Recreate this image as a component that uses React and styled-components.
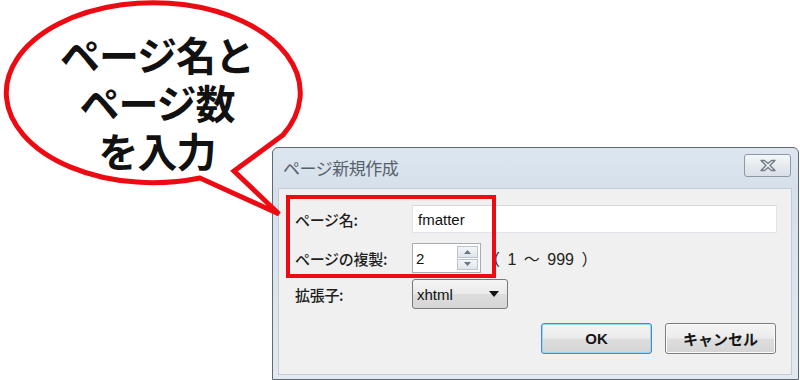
import React from "react";
import styled, { createGlobalStyle } from "styled-components";

const GlobalStyle = createGlobalStyle`
  html, body {
    margin: 0;
    padding: 0;
    background: #ffffff;
  }
  body {
    font-family: "Noto Sans CJK JP", "Liberation Sans", sans-serif;
  }
`;

const Page = styled.div`
  position: relative;
  width: 800px;
  height: 380px;
  overflow: hidden;
  box-sizing: border-box;
  padding: 147px 0 0 272px;
  background: #ffffff;
`;

const Callout = styled.div`
  position: absolute;
  left: 0;
  top: 0;
  width: 310px;
  height: 220px;
  z-index: 2;
`;

const CalloutShape = styled.svg`
  position: absolute;
  left: 0;
  top: 0;
`;

const CalloutText = styled.div`
  position: relative;
  box-sizing: border-box;
  width: 300px;
  padding: 30px 0 0 14px;
  text-align: center;
  font-family: "Noto Sans CJK JP", sans-serif;
  font-weight: 700;
  font-size: 40px;
  line-height: 48px;
  color: #111;
  letter-spacing: -1px;
`;

const Window = styled.div`
  box-sizing: border-box;
  width: 527px;
  height: 233px;
  border: 1px solid #5f6973;
  border-radius: 6px 6px 0 0;
  background: linear-gradient(180deg, #dde6ef 0%, #d6e0ea 18%, #e2e9f0 100%);
  display: flex;
  flex-direction: column;
  padding: 0 6px 4px 5px;
`;

const TitleBar = styled.div`
  height: 40px;
  display: flex;
  align-items: center;
  justify-content: space-between;
  padding: 0 0 2px 5px;
  box-sizing: border-box;
`;

const Title = styled.span`
  font-size: 17px;
  color: #56606a;
  letter-spacing: -0.5px;
`;

const CloseButton = styled.div`
  width: 47px;
  height: 23px;
  box-sizing: border-box;
  border: 1px solid #8e99a5;
  border-radius: 3px;
  background: linear-gradient(180deg, #f6f8fa 0%, #e4e9ee 55%, #d9e0e7 100%);
  display: flex;
  align-items: center;
  justify-content: center;
  margin-top: -4px;
  margin-right: 1px;
`;

const Client = styled.div`
  position: relative;
  flex: 1;
  background: #f0f0f0;
  border: 1px solid #c3ccd5;
  display: flex;
  flex-direction: column;
  padding: 16px 14px 0 16px;
`;

const Row = styled.div`
  display: flex;
  align-items: center;
  margin-top: ${(p) => p.$gap || 0}px;
`;

const Label = styled.div`
  width: 117px;
  font-size: 15px;
  font-weight: 500;
  color: #1e1e1e;
  letter-spacing: -0.3px;
`;

const TextInput = styled.div`
  flex: 1;
  height: 28px;
  box-sizing: border-box;
  background: #ffffff;
  border: 1px solid #e2e3ea;
  border-top-color: #d5d7de;
  display: flex;
  align-items: center;
  padding-left: 5px;
  font-family: "Liberation Sans", Arial, sans-serif;
  font-size: 15px;
  color: #111;
`;

const SpinBox = styled.div`
  width: 69px;
  height: 30px;
  box-sizing: border-box;
  background: #ffffff;
  border: 1px solid #abadb3;
  display: flex;
  align-items: stretch;
`;

const SpinValue = styled.div`
  flex: 1;
  display: flex;
  align-items: center;
  padding-left: 3px;
  font-family: "Liberation Sans", Arial, sans-serif;
  font-size: 15px;
  color: #111;
`;

const SpinButtons = styled.div`
  width: 21px;
  margin: 2px 2px 2px 0;
  display: flex;
  flex-direction: column;
  gap: 1px;
`;

const SpinArrow = styled.div`
  flex: 1;
  box-sizing: border-box;
  border: 1px solid #b9c4cf;
  background: linear-gradient(180deg, #f3f6f9 0%, #dde5ec 100%);
  display: flex;
  align-items: center;
  justify-content: center;
`;

const Range = styled.span`
  margin-left: 3px;
  font-family: "Liberation Sans", "Noto Sans CJK JP", sans-serif;
  font-size: 16px;
  color: #222;
  word-spacing: 3px;
`;

const Select = styled.div`
  width: 96px;
  height: 30px;
  box-sizing: border-box;
  border: 1px solid #7a7a7a;
  border-radius: 3px;
  background: linear-gradient(180deg, #f5f5f5 0%, #ebebeb 48%, #dcdcdc 52%, #d6d6d6 100%);
  display: flex;
  align-items: center;
  justify-content: space-between;
  padding: 0 8px 0 4px;
  font-family: "Liberation Sans", Arial, sans-serif;
  font-size: 15px;
  color: #111;
`;

const ButtonRow = styled.div`
  display: flex;
  justify-content: flex-end;
  gap: 13px;
  margin-top: 14px;
  padding-right: 1px;
`;

const Button = styled.div`
  width: 111px;
  height: 31px;
  box-sizing: border-box;
  border-radius: 3px;
  border: 1px solid ${(p) => (p.$primary ? "#3c8fc7" : "#7d7d7d")};
  box-shadow: ${(p) => (p.$primary ? "inset 0 0 0 1px #9ad5f2" : "inset 0 0 0 1px #fbfbfb")};
  background: linear-gradient(180deg, #f4f4f4 0%, #ececec 48%, #dedede 52%, #d4d4d4 100%);
  display: flex;
  align-items: center;
  justify-content: center;
  font-family: "Liberation Sans", "Noto Sans CJK JP", sans-serif;
  font-size: 15px;
  font-weight: 600;
  color: #151515;
`;

const Highlight = styled.div`
  position: absolute;
  left: 7px;
  top: 6px;
  width: 210px;
  height: 83px;
  box-sizing: border-box;
  border: 4px solid #ee0a12;
  pointer-events: none;
`;

function Bubble() {
  return (
    <Callout>
      <CalloutShape width="310" height="220" viewBox="0 0 310 220">
        <path
          d="M 200 178 A 147 90 0 1 1 283 135 L 234 171 L 279 214 Z"
          fill="#ffffff"
          stroke="#ee0a12"
          strokeWidth="5"
          strokeLinejoin="miter"
        />
      </CalloutShape>
      <CalloutText>
        <div>ページ名と</div>
        <div>ページ数</div>
        <div>を入力</div>
      </CalloutText>
    </Callout>
  );
}

function CloseGlyph() {
  return (
    <svg width="18" height="13" viewBox="0 0 18 13">
      <path
        d="M2 1.5 L5.5 1.5 L9 4.5 L12.5 1.5 L16 1.5 L11 6.5 L16 11.5 L12.5 11.5 L9 8.5 L5.5 11.5 L2 11.5 L7 6.5 Z"
        fill="#eef1f4"
        stroke="#6f7a85"
        strokeWidth="1.3"
        strokeLinejoin="round"
      />
    </svg>
  );
}

function Arrow({ up }) {
  return (
    <svg width="7" height="4" viewBox="0 0 7 4">
      <path d={up ? "M0 4 L3.5 0 L7 4 Z" : "M0 0 L3.5 4 L7 0 Z"} fill="#6a7684" />
    </svg>
  );
}

export default function App() {
  return (
    <>
      <GlobalStyle />
      <Page>
        <Window>
          <TitleBar>
            <Title>ページ新規作成</Title>
            <CloseButton>
              <CloseGlyph />
            </CloseButton>
          </TitleBar>
          <Client>
            <Row>
              <Label>ページ名:</Label>
              <TextInput>fmatter</TextInput>
            </Row>
            <Row $gap={10}>
              <Label>ページの複製:</Label>
              <SpinBox>
                <SpinValue>2</SpinValue>
                <SpinButtons>
                  <SpinArrow>
                    <Arrow up />
                  </SpinArrow>
                  <SpinArrow>
                    <Arrow />
                  </SpinArrow>
                </SpinButtons>
              </SpinBox>
              <Range>（ 1 ～ 999 ）</Range>
            </Row>
            <Row $gap={6}>
              <Label>拡張子:</Label>
              <Select>
                <span>xhtml</span>
                <svg width="10" height="6" viewBox="0 0 10 6">
                  <path d="M0 0 L10 0 L5 6 Z" fill="#111" />
                </svg>
              </Select>
            </Row>
            <ButtonRow>
              <Button $primary>OK</Button>
              <Button>キャンセル</Button>
            </ButtonRow>
            <Highlight />
          </Client>
        </Window>
        <Bubble />
      </Page>
    </>
  );
}
